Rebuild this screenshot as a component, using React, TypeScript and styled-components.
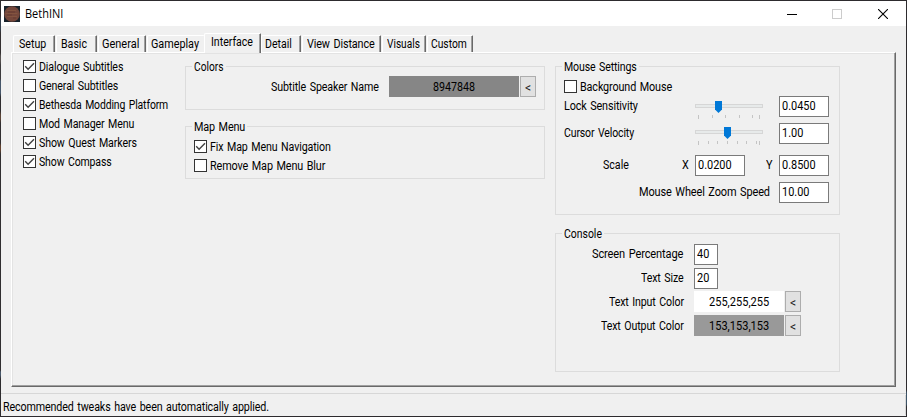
import React from 'react';
import styled, { createGlobalStyle, css } from 'styled-components';

const GlobalStyle = createGlobalStyle`
  * { box-sizing: border-box; }
  body { margin: 0; background: #f0f0f0; }
`;

const Window = styled.div`
  width: 907px;
  height: 417px;
  display: grid;
  grid-template-columns: 1px 905px 1px;
  grid-template-rows: 415px;
  border: solid #2d2b2e;
  border-width: 1px 0;
  background: #f0f0f0;
  color: #000;
  font: 12px/16px Roboto, 'Liberation Sans', sans-serif;
`;

const LeftEdge = styled.div`
  background: linear-gradient(#2d2b2e 0 15px, #34404e 18px 28px, #332f30 32px 52px, #55504e 55px 60px,
    #3b3a3c 64px 78px, #46566a 80px 92px, #2f2d2f 96px 110px, #5b4436 114px 118px, #302e30 122px 142px,
    #62422f 145px 149px, #302e30 153px 369px, #48586a 371px 374px, #2d2b2e 378px);
`;

const RightEdge = styled.div`
  background: linear-gradient(#2d2b2e 0 389px, #3d5468 392px 403px, #2d2b2e 406px);
`;

const Frame = styled.div`
  display: flex;
  flex-direction: column;
`;

const TextBox = styled.span<{ $w: number }>`
  display: block;
  flex: none;
  width: ${(p) => p.$w}px;
  height: 15px;
  white-space: pre;
`;

const Glyphs = styled.span<{ $k: number; $phrase: boolean }>`
  display: inline-block;
  vertical-align: top;
  transform: scaleX(${(p) => p.$k});
  transform-origin: 0 0;
  ${(p) =>
    p.$phrase &&
    css`
      word-spacing: 1.2px;
      letter-spacing: -0.14px;
    `}
`;

/* Condensed label: w is the drawn width, k the horizontal compression. */
function Text({ w, k = 0.885, children }: { w: number; k?: number; children: string }) {
  return (
    <TextBox $w={w}>
      <Glyphs $k={k} $phrase={children.includes(' ')}>{children}</Glyphs>
    </TextBox>
  );
}

const TitleBar = styled.header`
  height: 25px;
  display: flex;
  align-items: center;
  padding: 0 18px 0 3px;
  background: #fff;
`;

const Title = styled.div`
  flex: 1;
  margin: -1px 0 0 5px;
  font: 12px/16px 'Open Sans', sans-serif;
`;

const WindowControls = styled.div`
  display: flex;
  gap: 35px;

  svg { display: block; }
  svg:last-child { margin-left: 1px; }
`;

const TabStrip = styled.nav`
  display: flex;
  align-items: flex-end;
  gap: 1px;
  height: 26px;
  padding-left: 12px;
`;

const Tab = styled.div<{ $w: number; $pad: number; $selected?: boolean; $covered?: boolean }>`
  flex: none;
  width: ${(p) => p.$w}px;
  height: 17px;
  display: flex;
  padding-left: ${(p) => p.$pad}px;
  border: 1px solid #fff;
  border-bottom: 0;
  border-right-color: #696969;
  border-radius: 2px 1px 0 0;
  box-shadow: inset -1px 0 #a0a0a0;
  ${(p) =>
    p.$covered &&
    css`
      border-right: 0;
      box-shadow: none;
      margin-right: -1px;
    `}
  ${(p) =>
    p.$selected &&
    css`
      height: 20px;
      margin: 0 -1px -1px 0;
      background: #f0f0f0;
      z-index: 1;
    `}
`;

const Panel = styled.main`
  width: 885px;
  height: 335px;
  margin-left: 10px;
  display: flex;
  align-items: flex-start;
  padding: 7px 0 0 11px;
  border: 1px solid #fff;
  border-right-color: #696969;
  border-bottom-color: #696969;
  box-shadow: inset -1px -1px #a0a0a0, inset 1px 1px #e3e3e3;
`;

const Options = styled.div`
  width: 162px;
  display: flex;
  flex-direction: column;
  gap: 6px;
`;

const Column = styled.div<{ $w: number; $gap: number }>`
  width: ${(p) => p.$w}px;
  margin-right: 10px;
  display: flex;
  flex-direction: column;
  gap: ${(p) => p.$gap}px;
`;

const CheckLabel = styled.label`
  height: 13px;
  display: flex;
  align-items: center;
  gap: 3px;

  svg { display: block; flex: none; }
`;

const Group = styled.fieldset<{ $h: number }>`
  height: ${(p) => p.$h}px;
  min-width: 0;
  margin: 0;
  padding: 0 8px;
  border: 1px solid #dcdcdc;
`;

const Legend = styled.legend`
  height: 13px;
  display: flex;
  align-items: center;
  margin-left: -2px;
  padding: 0 2px 0 1.5px;
`;

const Stack = styled.div<{ $top: number; $gap: number }>`
  display: flex;
  flex-direction: column;
  gap: ${(p) => p.$gap}px;
  padding-top: ${(p) => p.$top}px;
`;

const FieldRow = styled.div<{ $top?: number }>`
  height: 21px;
  display: flex;
  justify-content: flex-end;
  margin-top: ${(p) => p.$top ?? 0}px;
  padding-right: 2px;

  & > ${TextBox} { margin-top: 2px; }
`;

const SwatchRow = styled.div`
  height: 21px;
  display: flex;
  align-items: center;
  justify-content: flex-end;
`;

const Spacer = styled.div<{ $w?: number }>`
  flex: ${(p) => (p.$w === undefined ? '1' : `0 0 ${p.$w}px`)};
`;

const Input = styled.div<{ $w?: number }>`
  flex: none;
  width: ${(p) => p.$w ?? 50}px;
  height: 21px;
  padding: 1px 0 0 2px;
  border: 1px solid #7a7a7a;
  background: #fff;
`;

const Swatch = styled.div<{ $w: number; $color: string }>`
  flex: none;
  width: ${(p) => p.$w}px;
  height: 21px;
  display: flex;
  align-items: center;
  justify-content: center;
  margin: 0 1px 0 10px;
  background: ${(p) => p.$color};
`;

const PickButton = styled.button`
  flex: none;
  width: 16px;
  height: 21px;
  display: flex;
  align-items: center;
  justify-content: center;
  padding: 0;
  border: 1px solid #adadad;
  background: #e1e1e1;
  color: #222;
  font: inherit;
  font-size: 13.5px;
`;

const ConsoleLabel = styled.div`
  width: 120px;
  display: flex;
  justify-content: flex-end;
`;

const ConsoleRow = styled.div<{ $top?: number; $lift?: boolean }>`
  height: 21px;
  display: flex;
  align-items: ${(p) => (p.$lift ? 'flex-start' : 'center')};
  margin-top: ${(p) => p.$top ?? 0}px;

  & > ${ConsoleLabel} { margin-top: ${(p) => (p.$lift ? 2 : 0)}px; }
  & > ${Input} { margin-left: 10px; }
`;

const SliderArt = styled.svg<{ $top: number }>`
  display: block;
  flex: none;
  margin: ${(p) => p.$top}px 16px 0 0;
`;

const StatusBar = styled.footer`
  height: 23px;
  margin-top: 6px;
  padding: 5px 0 0 2px;
  border-top: 1px solid #d7d7d7;
  background: linear-gradient(#d7d7d7, #d7d7d7) 904px 1px / 1px 20px no-repeat;
`;

function AppIcon() {
  return (
    <svg width="16" height="16" viewBox="0 0 16 16">
      <rect width="16" height="16" fill="#18222b" />
      <circle cx="8" cy="8" r="7.8" fill="#74473b" />
      <path d="M3 4.5h9M1.5 7.5h12M3 10.5h10" stroke="#83533f" strokeWidth="1" fill="none" />
      <path d="M4 6h7M3 9h5M9 12h3" stroke="#66392f" strokeWidth=".8" fill="none" />
    </svg>
  );
}

function Check({ on, w, k, children }: { on?: boolean; w: number; k?: number; children: string }) {
  return (
    <CheckLabel>
      <svg width="13" height="13" viewBox="0 0 13 13">
        <rect x=".5" y=".5" width="12" height="12" fill="#fff" stroke="#333" />
        {on && <path d="M2.2 6.3 5.1 9.2 11 3.3" fill="none" stroke="#404040" strokeWidth="1.4" />}
      </svg>
      <Text w={w} k={k}>{children}</Text>
    </CheckLabel>
  );
}

function Slider({ value, ticks, top }: { value: number; ticks: number[]; top: number }) {
  return (
    <SliderArt $top={top} width="68" height="18" viewBox="0 0 68 18">
      <rect x=".5" y="3.5" width="67" height="3" fill="#e7eaea" stroke="#d6d6d6" />
      <path d={`M${value} 0h7v8.5l-3.5 3.5l-3.5-3.5z`} fill="#0078d7" />
      {ticks.map((x, i) => (
        <rect key={x} x={x} y="14" width="1" height={i === 0 || i === ticks.length - 1 ? 4 : 3} fill="#c4c4c4" />
      ))}
    </SliderArt>
  );
}

function Pick() {
  return (
    <PickButton>
      <Text w={6} k={0.9}>{'<'}</Text>
    </PickButton>
  );
}

const tabs = [
  { name: 'Setup', w: 42, pad: 4.5, text: 27.5, k: 0.885 },
  { name: 'Basic', w: 41, pad: 3.5, text: 26, k: 0.885 },
  { name: 'General', w: 48, pad: 3, text: 37.5, k: 0.915 },
  { name: 'Gameplay', w: 57, pad: 3, text: 48, k: 0.9, covered: true },
  { name: 'Interface', w: 57, pad: 5.5, text: 42, k: 0.88, selected: true },
  { name: 'Detail', w: 40, pad: 2.5, text: 27, k: 0.88 },
  { name: 'View Distance', w: 79, pad: 4, text: 68, k: 0.9 },
  { name: 'Visuals', w: 44, pad: 4, text: 33, k: 0.842 },
  { name: 'Custom', w: 46, pad: 3, text: 36, k: 0.857 },
];

export default function App() {
  return (
    <>
      <GlobalStyle />
      <Window>
        <LeftEdge />
        <Frame>
          <TitleBar>
            <AppIcon />
            <Title>
              <Text w={39} k={0.915}>BethINI</Text>
            </Title>
            <WindowControls>
              <svg width="10" height="10"><path d="M0 5.5h10" stroke="#000" /></svg>
              <svg width="10" height="10"><rect x=".5" y=".5" width="9" height="9" fill="none" stroke="#ccc" /></svg>
              <svg width="10" height="10"><path d="M0 0 10 10M10 0 0 10" stroke="#000" strokeWidth="1.1" /></svg>
            </WindowControls>
          </TitleBar>
          <TabStrip>
            {tabs.map((t) => (
              <Tab key={t.name} $w={t.w} $pad={t.pad} $selected={t.selected} $covered={t.covered}>
                <Text w={t.text} k={t.k}>{t.name}</Text>
              </Tab>
            ))}
          </TabStrip>
          <Panel>
            <Options>
              <Check on w={85}>Dialogue Subtitles</Check>
              <Check w={80}>General Subtitles</Check>
              <Check on w={130} k={0.868}>Bethesda Modding Platform</Check>
              <Check w={95}>Mod Manager Menu</Check>
              <Check on w={98}>Show Quest Markers</Check>
              <Check on w={73} k={0.875}>Show Compass</Check>
            </Options>
            <Column $w={360} $gap={10}>
              <Group $h={50}>
                <Legend><Text w={30} k={0.85}>Colors</Text></Legend>
                <Stack $top={3} $gap={0}>
                  <SwatchRow>
                    <Text w={108.5} k={0.89}>Subtitle Speaker Name</Text>
                    <Swatch $w={130} $color="#868686"><Text w={42} k={0.89}>8947848</Text></Swatch>
                    <Pick />
                  </SwatchRow>
                </Stack>
              </Group>
              <Group $h={59}>
                <Legend><Text w={51} k={0.9}>Map Menu</Text></Legend>
                <Stack $top={7} $gap={6}>
                  <Check on w={120} k={0.888}>Fix Map Menu Navigation</Check>
                  <Check w={115} k={0.902}>Remove Map Menu Blur</Check>
                </Stack>
              </Group>
            </Column>
            <Column $w={285} $gap={12}>
              <Group $h={155}>
                <Legend><Text w={73} k={0.88}>Mouse Settings</Text></Legend>
                <Stack $top={7} $gap={0}>
                  <Check w={92} k={0.9}>Background Mouse</Check>
                  <FieldRow $top={3}>
                    <Text w={74} k={0.9}>Lock Sensitivity</Text>
                    <Spacer />
                    <Slider top={5} value={20} ticks={[3, 17, 30, 44, 57, 64]} />
                    <Input><Text w={34} k={0.91}>0.0450</Text></Input>
                  </FieldRow>
                  <FieldRow $top={6}>
                    <Text w={70} k={0.875}>Cursor Velocity</Text>
                    <Spacer />
                    <Slider top={4} value={29} ticks={[3, 13, 22, 32, 42, 51, 61, 64]} />
                    <Input><Text w={22} k={0.91}>1.00</Text></Input>
                  </FieldRow>
                  <FieldRow $top={11}>
                    <Text w={26}>Scale</Text>
                    <Spacer $w={53} />
                    <Text w={7} k={0.9}>X</Text>
                    <Spacer $w={6} />
                    <Input><Text w={34} k={0.91}>0.0200</Text></Input>
                    <Spacer $w={21} />
                    <Text w={7} k={0.9}>Y</Text>
                    <Spacer $w={6} />
                    <Input><Text w={34} k={0.91}>0.8500</Text></Input>
                  </FieldRow>
                  <FieldRow $top={6}>
                    <Text w={130.5} k={0.912}>Mouse Wheel Zoom Speed</Text>
                    <Spacer $w={10} />
                    <Input><Text w={28} k={0.91}>10.00</Text></Input>
                  </FieldRow>
                </Stack>
              </Group>
              <Group $h={145}>
                <Legend><Text w={38} k={0.87}>Console</Text></Legend>
                <Stack $top={4} $gap={0}>
                  <ConsoleRow $lift>
                    <ConsoleLabel><Text w={92} k={0.92}>Screen Percentage</Text></ConsoleLabel>
                    <Input $w={24}><Text w={13} k={0.91}>40</Text></Input>
                  </ConsoleRow>
                  <ConsoleRow $lift $top={3}>
                    <ConsoleLabel><Text w={43}>Text Size</Text></ConsoleLabel>
                    <Input $w={24}><Text w={13} k={0.91}>20</Text></Input>
                  </ConsoleRow>
                  <ConsoleRow $top={2}>
                    <ConsoleLabel><Text w={75}>Text Input Color</Text></ConsoleLabel>
                    <Swatch $w={90} $color="#fff"><Text w={60} k={0.92}>255,255,255</Text></Swatch>
                    <Pick />
                  </ConsoleRow>
                  <ConsoleRow $top={3}>
                    <ConsoleLabel><Text w={83}>Text Output Color</Text></ConsoleLabel>
                    <Swatch $w={90} $color="#999"><Text w={60} k={0.92}>153,153,153</Text></Swatch>
                    <Pick />
                  </ConsoleRow>
                </Stack>
              </Group>
            </Column>
          </Panel>
          <StatusBar>
            <Text w={267} k={0.892}>Recommended tweaks have been automatically applied.</Text>
          </StatusBar>
        </Frame>
        <RightEdge />
      </Window>
    </>
  );
}
